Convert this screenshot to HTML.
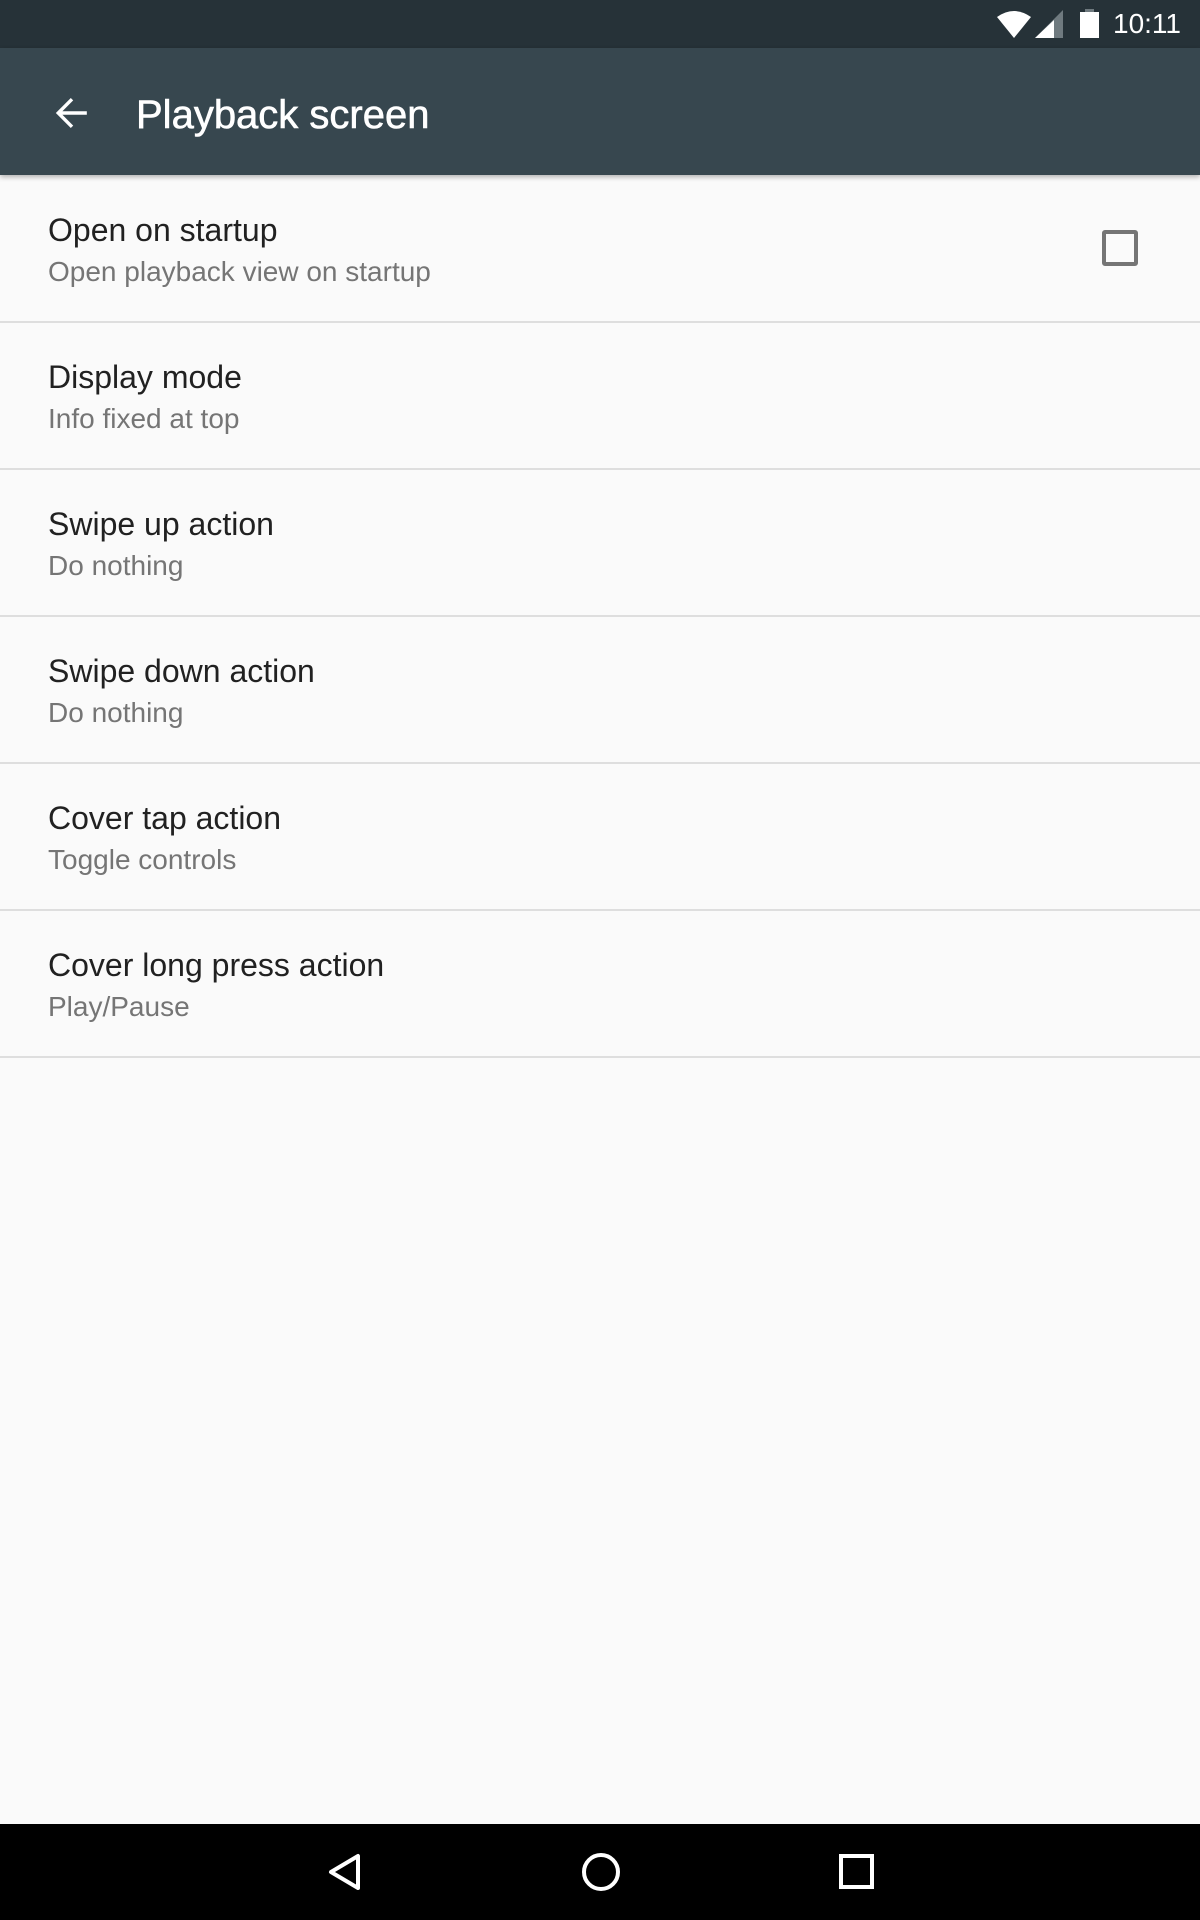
<!DOCTYPE html>
<html><head><meta charset="utf-8"><style>
*{margin:0;padding:0;box-sizing:border-box}
body{width:1200px;height:1920px;background:#fafafa;font-family:"Liberation Sans",Roboto,sans-serif;position:relative;overflow:hidden}
.status{position:absolute;left:0;top:0;width:1200px;height:48px;background:#263238}
.bar{position:absolute;left:0;top:48px;width:1200px;height:127px;background:#37474f;box-shadow:0 2px 5px rgba(0,0,0,.3);z-index:2}
.title{position:absolute;left:136px;top:4px;line-height:127px;font-size:40px;color:#fff;-webkit-text-stroke:0.6px #fff}
.row{position:absolute;left:0;width:1200px;height:147px;border-bottom:2px solid #dedede}
.p{position:absolute;left:48px;top:36px;font-size:32px;color:#212121}
.s{position:absolute;left:48px;top:80px;font-size:28px;color:#757575}
.nav{position:absolute;left:0;top:1824px;width:1200px;height:96px;background:#000}
</style></head><body>
<div class="status">
<svg style="position:absolute;left:995px;top:9px" width="75" height="32" viewBox="0 0 75 32">
<path d="M2 8 Q19 -4 36 8 L19 29 Z" fill="#fff"/>
<path d="M40 29 L68 29 L68 1 Z" fill="#6f7a7f"/>
<path d="M40 29 L59 29 L59 11 Z" fill="#fff"/>
</svg>
<svg style="position:absolute;left:1080px;top:9px" width="20" height="29"><rect x="5" y="0" width="9" height="4" fill="#6f7a7f"/><rect x="0" y="3" width="19" height="26" fill="#fff"/></svg>
<div style="position:absolute;left:1113px;top:8px;font-size:28px;color:#fff">10:11</div>
</div>
<div class="bar">
<svg style="position:absolute;left:54px;top:47px" width="36" height="36" viewBox="0 0 34 34"><path d="M31 17 H5 M17 4 L4 17 L17 30" stroke="#fff" stroke-width="3.2" fill="none"/></svg>
<div class="title">Playback screen</div>
</div>
<div class="row" style="top:176px"><div class="p">Open on startup</div><div class="s">Open playback view on startup</div>
<div style="position:absolute;left:1102px;top:54px;width:36px;height:36px;border:4px solid #757575;border-radius:3px"></div></div>
<div class="row" style="top:323px"><div class="p">Display mode</div><div class="s">Info fixed at top</div></div>
<div class="row" style="top:470px"><div class="p">Swipe up action</div><div class="s">Do nothing</div></div>
<div class="row" style="top:617px"><div class="p">Swipe down action</div><div class="s">Do nothing</div></div>
<div class="row" style="top:764px"><div class="p">Cover tap action</div><div class="s">Toggle controls</div></div>
<div class="row" style="top:911px"><div class="p">Cover long press action</div><div class="s">Play/Pause</div></div>
<div class="nav">
<svg style="position:absolute;left:326px;top:28px" width="40" height="40" viewBox="0 0 40 40"><path d="M32 4 L32 36 L5 20 Z" stroke="#fff" stroke-width="4" fill="none" stroke-linejoin="round"/></svg>
<svg style="position:absolute;left:580px;top:27px" width="42" height="42"><circle cx="21" cy="21" r="17" stroke="#fff" stroke-width="4" fill="none"/></svg>
<svg style="position:absolute;left:838px;top:29px" width="38" height="38"><rect x="3" y="3" width="31" height="31" stroke="#fff" stroke-width="4" fill="none"/></svg>
</div>
</body></html>
